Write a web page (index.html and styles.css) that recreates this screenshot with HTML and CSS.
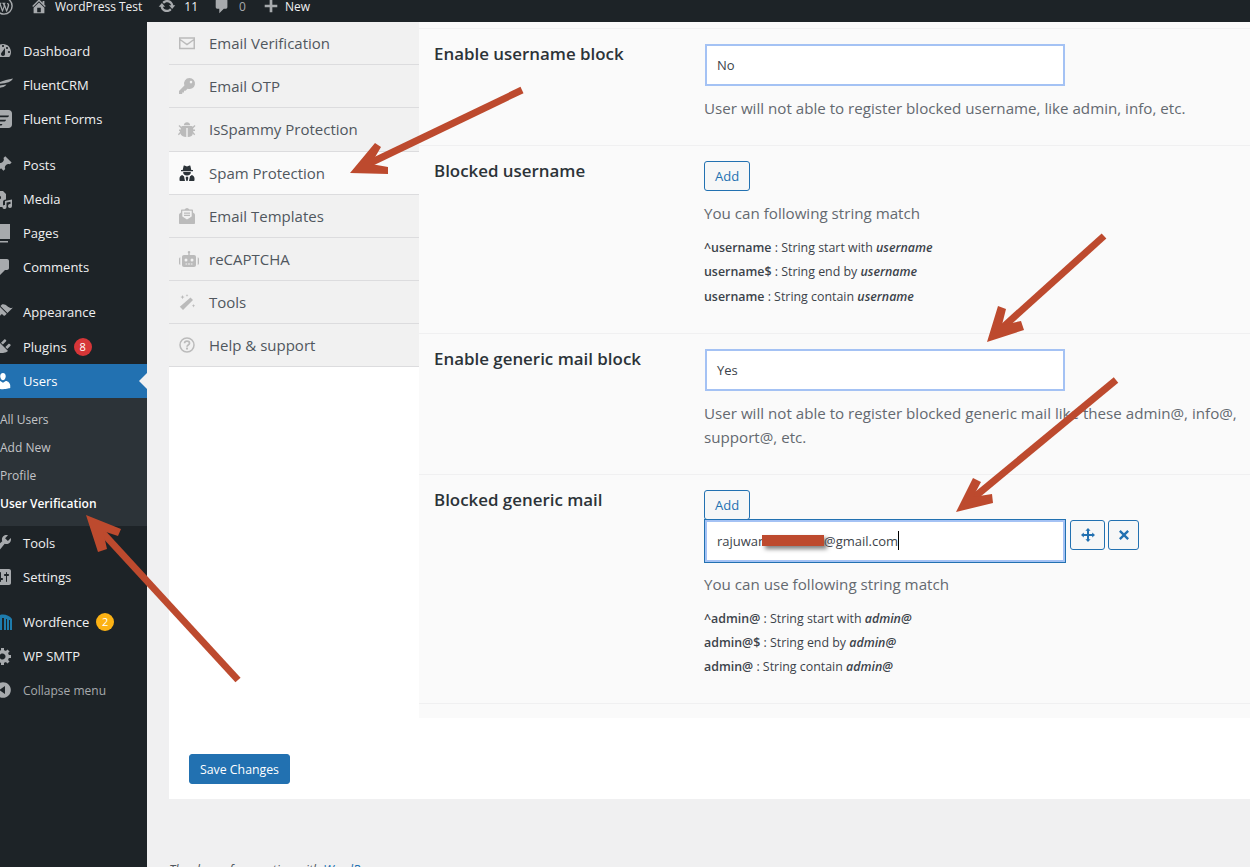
FILE: index.html
```html
<!DOCTYPE html>
<html lang="en">
<head>
  <meta charset="UTF-8">
  <meta name="viewport" content="width=device-width, initial-scale=1.0">
  <title>User Verification ‹ WordPress Test</title>
  <link rel="stylesheet" href="styles.css">
</head>
<body>
  <div class="adminbar">
    <svg class="bar-icon bar-logo" viewBox="0 0 20 20"><circle cx="10" cy="10" r="9" fill="none" stroke="#a7aaad" stroke-width="1.6"/><path d="M3.6 6.5h3.6v.7l-.9.2 2.1 6.2 1.3-3.7-.9-2.5-.8-.2v-.7h3.7v.7l-.9.2 2.1 6.1 1.1-3.4c.5-1.7-.4-2.3-.9-3.1 1-.8 2.800.2 2.700 2.100-.1 1.200-1.700 5.600-2.500 7.300h-.8l-1.900-5.300-1.900 5.300h-.8L4.700 7.400l-1.100-.2z" fill="#a7aaad"/></svg>
    <svg class="bar-icon bar-home" viewBox="0 0 20 20"><path d="M16 8.500l1.530 1.530-1.060 1.060L10 4.620l-6.470 6.470-1.060-1.060L10 2.500l4 4v-2h2v4zm-6-2.460l6 5.990V18H4v-5.970zM12 17v-5H8v5h4z"/></svg>
    <span class="bar-text bar-site">WordPress Test</span>
    <svg class="bar-icon bar-update" viewBox="0 0 20 20"><path d="M10.200 3.280c3.530 0 6.430 2.610 6.920 6h2.080l-3.500 4-3.500-4h2.320c-.45-1.970-2.210-3.440-4.320-3.440-1.450 0-2.730.71-3.540 1.780L4.950 5.660C6.230 4.200 8.110 3.280 10.200 3.280zm-.4 13.440c-3.520 0-6.430-2.610-6.920-6H.8l3.500-4c1.170 1.330 2.330 2.670 3.500 4H5.480c.45 1.970 2.210 3.440 4.320 3.440 1.450 0 2.730-.71 3.540-1.780l1.710 1.950c-1.280 1.460-3.150 2.390-5.250 2.390z"/></svg>
    <span class="bar-text bar-count">11</span>
    <svg class="bar-icon bar-comment" viewBox="0 0 20 20"><path d="M5 2h9c1.100 0 2 .9 2 2v7c0 1.100-.9 2-2 2h-2l-5 5v-5H5c-1.100 0-2-.9-2-2V4c0-1.100.9-2 2-2z"/></svg>
    <span class="bar-text bar-zero">0</span>
    <svg class="bar-icon bar-plus" viewBox="0 0 20 20"><path d="M8.500 3h3v5.500H17v3h-5.500V17h-3v-5.500H3v-3h5.500z"/></svg>
    <span class="bar-text bar-new">New</span>
  </div>

  <div class="layout">
    <nav class="sidebar">
      <a class="menu-item"><svg class="menu-icon" viewBox="0 0 20 20"><path d="M3.760 16h12.480c1.100-1.370 1.760-3.110 1.760-5 0-4.420-3.580-8-8-8s-8 3.580-8 8c0 1.890.66 3.630 1.760 5zM10 4c.55 0 1 .45 1 1s-.45 1-1 1-1-.45-1-1 .45-1 1-1zM6 6c.55 0 1 .45 1 1s-.45 1-1 1-1-.45-1-1 .45-1 1-1zm8 0c.55 0 1 .45 1 1s-.45 1-1 1-1-.45-1-1 .45-1 1-1zm-5.370 5.550L12 7v6c0 1.100-.9 2-2 2s-2-.9-2-2c0-.57.24-1.080.63-1.450zM4 10c.55 0 1 .45 1 1s-.45 1-1 1-1-.45-1-1 .45-1 1-1zm12 0c.55 0 1 .45 1 1s-.45 1-1 1-1-.45-1-1 .45-1 1-1z"/></svg>Dashboard</a>
      <a class="menu-item"><svg class="menu-icon" viewBox="0 0 20 20"><path d="M1 9.500C6 7 12 5 20 3.500c-1 2-2.500 3-4.500 3.700C11 8.500 6 9 1 9.500zM1 15c1-2.500 2.500-3.500 5-4.200 2.500-.6 4.500-.9 7.500-1.300-1 1.600-2.500 2.400-4.500 2.800-3.500.6-5.800 1-8 2.700z"/></svg>FluentCRM</a>
      <a class="menu-item"><svg class="menu-icon" viewBox="0 0 20 20"><path fill-rule="evenodd" d="M3 1h12.500C17.500 1 19 2.500 19 4.500v11c0 2-1.500 3.500-3.500 3.500H3V1zm-3 5.500v1.700h14.500c.8 0 1.300-.7 1.500-1.700zm0 4.200v1.700h11.500c.8 0 1.300-.7 1.500-1.700zM3 15v1.500h5c.8 0 1.200-.6 1.400-1.500z"/></svg>Fluent Forms</a>

      <a class="menu-item menu-gap"><svg class="menu-icon" viewBox="0 0 20 20"><path d="M10.440 3.020l1.820-1.820 6.360 6.350-1.830 1.820c-1.050-.68-2.480-.57-3.410.36l-.75.75c-.92.93-1.040 2.350-.35 3.410l-1.830 1.820-2.410-2.410-2.800 2.790c-.42.42-3.380 2.710-3.800 2.290s1.860-3.390 2.280-3.810l2.790-2.790L4.100 9.360l1.830-1.820c1.050.69 2.480.57 3.400-.36l.75-.75c.93-.92 1.050-2.350.36-3.410z"/></svg>Posts</a>
      <a class="menu-item"><svg class="menu-icon" viewBox="0 0 20 20"><path d="M2 2h8l3 3v5.500c-2 0-3 1-3 2.500v5H2zm4 4.500a2 2 0 1 0 0 4 2 2 0 0 0 0-4zM12 12l7-1.500V17a2 2 0 1 1-1.500-1.900V12.700L13.500 13.500V18a2 2 0 1 1-1.500-1.900z"/></svg>Media</a>
      <a class="menu-item"><svg class="menu-icon" viewBox="0 0 20 20"><path d="M6 1h11v15H6zM4 4v14h11v1.500H2.500V4z"/></svg>Pages</a>
      <a class="menu-item"><svg class="menu-icon" viewBox="0 0 20 20"><path d="M5 2h9c1.100 0 2 .9 2 2v7c0 1.100-.9 2-2 2h-2l-5 5v-5H5c-1.100 0-2-.9-2-2V4c0-1.100.9-2 2-2z"/></svg>Comments</a>

      <a class="menu-item menu-gap-small"><svg class="menu-icon" viewBox="0 0 20 20"><path d="M14.480 11.060L7.410 3.990l1.500-1.500c.5-.56 2.300-.47 3.510.32 1.210.8 1.430 1.280 2.910 2.100 1.180.64 2.450 1.260 4.450.85zm-.71.71L6.700 4.700 4.930 6.470c-.39.39-.39 1.020 0 1.410l1.060 1.060c.39.39.39 1.030 0 1.420-.6.6-3.500 2.400-4.500 3.500-1.200 1.300-1.200 2.700-.4 3.500s2.200.8 3.500-.4c1.100-1 2.900-3.900 3.500-4.500.39-.39 1.030-.39 1.420 0l1.060 1.060c.39.39 1.020.39 1.410 0z"/></svg>Appearance</a>
      <a class="menu-item menu-plugins"><svg class="menu-icon" viewBox="0 0 20 20"><path d="M13.110 4.360L9.870 7.600 8 5.730l3.240-3.240c.35-.34 1.050-.2 1.560.32.52.51.66 1.210.31 1.550zm-8 1.770l.91-1.120 9.010 9.010-1.190.84c-.71.71-2.630 1.160-3.820 1.160H6.140L4.900 17.260c-.59.59-1.540.59-2.120 0-.59-.58-.59-1.530 0-2.120l1.240-1.240v-3.880c0-1.130.4-3.190 1.090-3.890zm7.260 3.970l3.240-3.240c.34-.35 1.040-.21 1.550.31.52.51.66 1.210.31 1.550l-3.240 3.250z"/></svg>Plugins<span class="badge badge-red">8</span></a>
      <a class="menu-item menu-active"><svg class="menu-icon" viewBox="0 0 20 20"><path d="M10 9.250c-2.270 0-2.730-3.440-2.730-3.440C7 4.020 7.820 2 9.970 2c2.160 0 2.980 2.020 2.710 3.810 0 0-.41 3.440-2.680 3.440zm0 2.570L12.720 10c2.390 0 4.520 2.330 4.520 4.530v2.490s-3.650 1.130-7.240 1.130c-3.650 0-7.240-1.130-7.240-1.130v-2.490c0-2.250 1.940-4.480 4.470-4.480z"/></svg>Users</a>
      <div class="submenu">
        <a class="sub-item">All Users</a>
        <a class="sub-item">Add New</a>
        <a class="sub-item">Profile</a>
        <a class="sub-item sub-current">User Verification</a>
      </div>
      <a class="menu-item"><svg class="menu-icon" viewBox="0 0 20 20"><path d="M16.680 9.770c-1.340 1.340-3.300 1.670-4.950.99l-5.410 6.520c-.99.99-2.590.99-3.580 0s-.99-2.590 0-3.570l6.520-5.420c-.68-1.650-.35-3.610.99-4.950 1.280-1.280 3.120-1.620 4.720-1.060l-2.890 2.890 2.820 2.820 2.860-2.870c.53 1.580.18 3.390-1.080 4.670z"/></svg>Tools</a>
      <a class="menu-item"><svg class="menu-icon" viewBox="0 0 20 20"><path d="M18 16V4c0-1.100-.9-2-2-2H4c-1.100 0-2 .9-2 2v12c0 1.100.9 2 2 2h12c1.100 0 2-.9 2-2zM8 11h1c.55 0 1 .45 1 1s-.45 1-1 1H8v1.500c0 .28-.22.5-.5.5s-.5-.22-.5-.5V13H6c-.55 0-1-.45-1-1s.45-1 1-1h1V5.500c0-.28.22-.5.5-.5s.5.22.5.5V11zm5-2h-1c-.55 0-1-.45-1-1s.45-1 1-1h1V5.500c0-.28.22-.5.5-.5s.5.22.5.5V7h1c.55 0 1 .45 1 1s-.45 1-1 1h-1v5.500c0 .28-.22.5-.5.5s-.5-.22-.5-.5V9z"/></svg>Settings</a>

      <a class="menu-item menu-gap-small"><svg class="menu-icon menu-icon-blue" viewBox="0 0 20 20"><path d="M1 7c2-3 5.500-4.500 9-4.500S17 4 19 7v11h-2V8h-1v10h-2V7h-1v11h-2V6H9v12H7V7H6v11H4V8H3v10H1z"/></svg>Wordfence<span class="badge badge-amber">2</span></a>
      <a class="menu-item"><svg class="menu-icon" viewBox="0 0 20 20"><path d="M18 12h-2.180c-.17.7-.44 1.350-.81 1.930l1.540 1.540-2.100 2.100-1.540-1.540c-.58.36-1.230.63-1.910.79V19H8v-2.180c-.68-.16-1.330-.43-1.910-.79l-1.540 1.540-2.120-2.120 1.540-1.540c-.36-.58-.63-1.230-.79-1.910H1V9.030h2.170c.16-.7.44-1.350.8-1.940L2.430 5.550l2.100-2.100 1.540 1.540c.58-.37 1.240-.64 1.930-.81V2h3v2.180c.68.16 1.330.43 1.910.79l1.540-1.540 2.120 2.120-1.540 1.540c.36.59.64 1.240.8 1.940H18V12zm-8.500 1.500c1.660 0 3-1.340 3-3s-1.340-3-3-3-3 1.340-3 3 1.340 3 3 3z"/></svg>WP SMTP</a>
      <a class="menu-item menu-collapse"><svg class="menu-icon" viewBox="0 0 20 20"><path d="M10 2.160c4.330 0 7.840 3.510 7.840 7.840s-3.510 7.840-7.840 7.840S2.160 14.330 2.160 10 5.710 2.160 10 2.160zm2 11.720V6.120L6.180 9.970z"/></svg>Collapse menu</a>
    </nav>

    <main class="content">
      <div class="panel">
        <div class="settings">
          <div class="tabs">
            <a class="tab"><svg class="tab-icon" viewBox="0 0 16 16"><path fill="none" stroke="currentColor" stroke-width="1.500" d="M.75 3h14.500v10.500H.75zM1 4.500l7 5 7-5"/></svg>Email Verification</a>
            <a class="tab"><svg class="tab-icon" viewBox="0 0 16 16"><path d="M10.500 0a5.500 5.500 0 1 1-1.900 10.650L6.500 12.700H5v1.800H3.200V16H0v-3l5.400-5.400A5.500 5.500 0 0 1 10.500 0zm1.500 2.800a1.300 1.300 0 1 0 0 2.600 1.300 1.300 0 0 0 0-2.600z"/></svg>Email OTP</a>
            <a class="tab tab-tall"><svg class="tab-icon" viewBox="0 0 16 16"><path d="M4.800 4.200C5 2.500 6.300 1.300 8 1.300s3 1.200 3.200 2.900zM3.500 5h9c.6 0 1 .4 1.300.8L15.500 4l1 1-2.300 2.300V8.500H16V10h-1.800v1l2 2.300-1 1-1.500-1.700C13.900 14.600 12 16 8.700 16V7H7.300v9c-3.300 0-5.200-1.400-5.900-3.400L-.1 14.300l-1-1 2-2.300V10H0V8.500h1.800V7.300L-.5 5l1-1 1.700 1.800C2.500 5.400 2.900 5 3.500 5z"/></svg>IsSpammy Protection</a>
            <a class="tab tab-active"><svg class="tab-icon" viewBox="0 0 16 16"><path fill-rule="evenodd" d="M5.400.6L8 1.400 10.600.6c.4-.1.7.1.8.4L12.300 5H14v1.200H2V5h1.700L4.600 1c.1-.3.400-.5.8-.4zM4.200 7h7.600c.2 2-1.200 3.500-3.800 3.500S4 9 4.200 7zM3.300 10c.4.500 1 .9 1.700 1.200L6 16H1.500c-.6 0-1-.4-1-1v-1.500C.5 11.700 1.700 10.500 3.300 10zm9.400 0c1.600.5 2.800 1.700 2.800 3.500V15c0 .6-.4 1-1 1H10l1-4.800c.7-.3 1.300-.7 1.700-1.200zM7 11.700h2L9.300 13 8.600 16H7.400l-.7-3z"/></svg>Spam Protection</a>
            <a class="tab"><svg class="tab-icon" viewBox="0 0 16 16"><path fill-rule="evenodd" d="M8 0c.5 0 .9.2 1.300.5L10.500 1.500H13c.6 0 1 .4 1 1v2.100l1.300 1c.4.300.7.800.7 1.300V15c0 .6-.4 1-1 1H1c-.6 0-1-.4-1-1V6.900c0-.5.3-1 .7-1.300l1.300-1V2.500c0-.6.4-1 1-1h2.500L6.700.5C7.100.2 7.500 0 8 0zM3.300 2.800v5.700L8 11.500l4.700-3V2.800zM5 4.500h6v1.200H5zM5 6.800h6V8H5z"/></svg>Email Templates</a>
            <a class="tab"><svg class="tab-icon tab-icon-wide" viewBox="0 0 20 16"><path fill-rule="evenodd" d="M10 0a1.200 1.200 0 0 1 .7 2.200V4H15c1.200 0 2 .8 2 2v8c0 1.200-.8 2-2 2H5c-1.200 0-2-.8-2-2V6c0-1.200.8-2 2-2h4.300V2.200A1.200 1.200 0 0 1 10 0zM7 7.500a1.500 1.500 0 1 0 0 3 1.500 1.500 0 0 0 0-3zm6 0a1.500 1.500 0 1 0 0 3 1.500 1.500 0 0 0 0-3zM6.500 12.500v1h1.700v-1zm2.500 0v1h2v-1zm2.800 0v1h1.700v-1zM0 8c0-1 .5-1.500 1.300-1.800V14C.5 13.700 0 13 0 12zm20 0v4c0 1-.5 1.700-1.300 2V6.200C19.500 6.500 20 7 20 8z"/></svg>reCAPTCHA</a>
            <a class="tab"><svg class="tab-icon" viewBox="0 0 16 16"><path d="M11.500 3.500l2.500 2.500L4 16l-3.200-3.200zM3.500 1l.6 1.500 1.500.6-1.500.6-.6 1.500-.6-1.500-1.500-.6 1.500-.6zM8 0l.4 1 1 .4-1 .4L8 3l-.4-1.200-1-.4 1-.4zM14.500 10l.5 1.200 1.200.5-1.200.5-.5 1.200-.5-1.200-1.200-.5 1.200-.5z"/></svg>Tools</a>
            <a class="tab"><svg class="tab-icon" viewBox="0 0 16 16"><circle cx="8" cy="8" r="7" fill="none" stroke="currentColor" stroke-width="1.500"/><path fill="none" stroke="currentColor" stroke-width="1.700" d="M5.500 6.300C5.600 4.900 6.700 4.200 8 4.200c1.400 0 2.500.8 2.500 2 0 1.900-2.500 1.700-2.500 3.600"/><rect x="7" y="10.600" width="2" height="1.900" fill="currentColor"/></svg>Help &amp; support</a>
          </div>

          <div class="fields">
            <section class="row row-first">
              <h3 class="row-label">Enable username block</h3>
              <div class="row-body">
                <div class="select">No</div>
                <p class="desc">User will not able to register blocked username, like admin, info, etc.</p>
              </div>
            </section>

            <section class="row row-list">
              <h3 class="row-label">Blocked username</h3>
              <div class="row-body">
                <button class="btn">Add</button>
                <p class="desc">You can following string match</p>
                <ul class="matches">
                  <li><b>^username</b> : String start with <b><i>username</i></b></li>
                  <li><b>username$</b> : String end by <b><i>username</i></b></li>
                  <li><b>username</b> : String contain <b><i>username</i></b></li>
                </ul>
              </div>
            </section>

            <section class="row">
              <h3 class="row-label">Enable generic mail block</h3>
              <div class="row-body">
                <div class="select">Yes</div>
                <p class="desc">User will not able to register blocked generic mail like these admin@, info@, support@, etc.</p>
              </div>
            </section>

            <section class="row row-last">
              <h3 class="row-label">Blocked generic mail</h3>
              <div class="row-body">
                <button class="btn">Add</button>
                <div class="mail-line">
                  <div class="mail-input">rajuwan<span class="redacted"></span>@gmail.com<span class="caret"></span></div>
                  <button class="btn btn-icon btn-move"><svg viewBox="0 0 14 14" width="14" height="14"><path d="M7 0l2.600 2.800H8V6h3.200V4.400L14 7l-2.800 2.600V8H8v3.200h1.600L7 14l-2.600-2.800H6V8H2.800v1.600L0 7l2.800-2.600V6H6V2.800H4.400z"/></svg></button>
                  <button class="btn btn-icon btn-remove"><svg viewBox="0 0 12 12" width="10" height="10"><path d="M2 0l4 4 4-4 2 2-4 4 4 4-2 2-4-4-4 4-2-2 4-4-4-4z"/></svg></button>
                </div>
                <p class="desc">You can use following string match</p>
                <ul class="matches">
                  <li><b>^admin@</b> : String start with <b><i>admin@</i></b></li>
                  <li><b>admin@$</b> : String end by <b><i>admin@</i></b></li>
                  <li><b>admin@</b> : String contain <b><i>admin@</i></b></li>
                </ul>
              </div>
            </section>
          </div>
        </div>

        <div class="panel-foot">
          <button class="btn-save">Save Changes</button>
        </div>
      </div>
      <p class="footer-note">Thank you for creating with <a>WordPress</a>.</p>
    </main>
  </div>

  <svg class="arrows" viewBox="0 0 1250 867" width="1250" height="867">
    <g stroke="#bd4a2e" stroke-width="7" fill="#bd4a2e">
      <line x1="522" y1="90" x2="368" y2="164"/>
      <line x1="1104" y1="236" x2="1002" y2="328"/>
      <line x1="1116" y1="380" x2="972" y2="499"/>
      <line x1="238" y1="680" x2="101" y2="531"/>
    </g>
    <g fill="#bd4a2e">
      <polygon points="350,173 375,143 381,147 371,164 388,167 388,174"/>
      <polygon points="987,342 998,306 1006,309 1002,325 1021,321 1024,330"/>
      <polygon points="956,512 973,478 981,482 973,497 992,494 993,503"/>
      <polygon points="86,515 121,529 118,536 103,531 107,549 98,552"/>
    </g>
  </svg>
</body>
</html>
```

FILE: styles.css
```css
html, body {
  height: 867px;
  overflow: hidden;
}
body {
  margin: 0;
  position: relative;
  background: #f0f0f1;
  font-family: "Open Sans", "Noto Sans", sans-serif;
  font-size: 13px;
  color: #3c434a;
}

/* admin bar, top is cut off in the shot */
.adminbar {
  display: flex;
  align-items: flex-start;
  height: 22px;
  background: #1d2327;
  color: #f0f0f1;
  font-size: 12px;
  line-height: 12px;
}
.bar-text { margin-top: 1px; }
.bar-icon {
  width: 18px;
  height: 18px;
  margin-top: -3px;
  fill: #a7aaad;
  flex: none;
}
.bar-logo { margin-left: -5px; }
.bar-home { margin-left: 17px; }
.bar-site { margin-left: 7px; }
.bar-update { margin-left: 16px; }
.bar-count { margin-left: 8px; }
.bar-comment { margin-left: 15px; }
.bar-zero { margin-left: 8px; color: #a7aaad; }
.bar-plus { margin-left: 16px; }
.bar-new { margin-left: 5px; }

.layout {
  display: flex;
  height: 845px;
}

/* sidebar */
.sidebar {
  width: 147px;
  flex: none;
  padding-top: 12px;
  background: #1d2327;
  overflow: hidden;
  box-sizing: border-box;
}
.menu-item {
  position: relative;
  display: flex;
  align-items: center;
  height: 34px;
  color: #f0f0f1;
}
.menu-gap { margin-top: 12px; }
.menu-gap-small { margin-top: 11px; }
.menu-plugins { margin-top: 1px; }
.menu-icon {
  width: 20px;
  height: 20px;
  margin-left: -7px;
  margin-right: 10px;
  fill: #a7aaad;
  flex: none;
}
.menu-icon-blue { fill: #1e7cad; }
.menu-active {
  background: #2271b1;
  color: #fff;
}
.menu-active .menu-icon { fill: #fff; }
.menu-active::after {
  content: "";
  position: absolute;
  right: 0;
  top: 9px;
  border: 8px solid transparent;
  border-left: 0;
  border-right-color: #f0f0f1;
}
.menu-collapse { color: #a7aaad; font-size: 12px; }
.badge {
  width: 18px;
  height: 18px;
  margin-left: 7px;
  border-radius: 50%;
  color: #fff;
  font-size: 11px;
  line-height: 18px;
  text-align: center;
}
.badge-red { background: #d63638; }
.badge-amber { background: #fcb214; }
.submenu {
  padding: 8px 0;
  background: #2c3338;
  font-size: 12px;
}
.sub-item {
  display: block;
  height: 28px;
  line-height: 28px;
  color: #c3c4c7;
}
.sub-current {
  color: #fff;
  font-weight: 600;
}

/* main area */
.content {
  flex: 1;
  min-width: 0;
  padding-left: 22px;
}
.panel {
  background: #fff;
  height: 777px;
}
.settings {
  display: flex;
  height: 696px;
}
.tabs {
  width: 250px;
  flex: none;
}
.tab {
  display: flex;
  align-items: center;
  box-sizing: border-box;
  height: 43px;
  padding-left: 10px;
  background: #f1f1f1;
  border-bottom: 1px solid #dcdcde;
  color: #50575e;
  font-size: 15px;
}
.tab-tall {
  height: 44px;
  padding-bottom: 1px;
}
.tab-active {
  background: #fafafa;
}
.tab-icon {
  width: 16px;
  height: 16px;
  margin-right: 14px;
  flex: none;
  fill: currentColor;
  color: #bbb;
  overflow: visible;
}
.tab-icon-wide { width: 20px; margin-right: 10px; }
.tab-active .tab-icon { color: #2c3338; }

.fields {
  flex: 1;
  min-width: 0;
  padding-top: 6px;
  background: #fafafa;
}
.row {
  display: flex;
  padding: 15px 0 25px 15px;
  border-bottom: 1px solid #f0f0f1;
}
.row-first { border-top: 1px solid #f0f0f1; }
.row-list { padding-bottom: 24px; }
.row-last { padding-bottom: 23px; }
.row-label {
  width: 270px;
  flex: none;
  margin: 0;
  color: #2c3338;
  font-size: 16.9px;
  font-weight: 600;
  line-height: 20px;
}
.row-body {
  flex: 1;
  min-width: 0;
}
.select {
  box-sizing: border-box;
  width: 360px;
  height: 42px;
  margin-left: 1px;
  padding-left: 10px;
  background: #fff;
  border: 2px solid #a4c2f4;
  line-height: 38px;
}
.desc {
  margin: 10px 0 0;
  color: #646970;
  font-size: 15.15px;
  line-height: 24px;
}
.btn {
  display: block;
  box-sizing: border-box;
  height: 30px;
  padding: 0 10px;
  background: #f6f7f7;
  border: 1px solid #2271b1;
  border-radius: 3px;
  color: #2271b1;
  font-family: inherit;
  font-size: 13px;
}
.matches {
  margin: 11px 0 0;
  padding: 0;
  list-style: none;
  font-size: 12.4px;
  line-height: 24.3px;
}
.matches b { font-weight: 600; }
.mail-line {
  display: flex;
  align-items: flex-start;
  margin: -1px 0 -1px;
}
.mail-input {
  display: flex;
  align-items: center;
  box-sizing: border-box;
  width: 362px;
  height: 44px;
  margin-right: 4px;
  padding-left: 12px;
  background: #fff;
  border: 1px solid #2271b1;
  box-shadow: inset 0 0 0 2px #a4c2f4;
  white-space: nowrap;
}
.redacted {
  width: 62px;
  height: 11px;
  margin-left: -4px;
  background: #bd4a2e;
  box-shadow: 3px 3px 4px rgba(0, 0, 0, 0.5);
}
.caret {
  width: 1px;
  height: 19px;
  background: #000;
}
.btn-icon {
  display: flex;
  align-items: center;
  justify-content: center;
  padding: 0;
  margin-top: 1px;
  fill: #2271b1;
}
.btn-move { width: 35px; margin-right: 3px; }
.btn-remove { width: 31px; }

.panel-foot {
  padding: 36px 0 0 20px;
}
.btn-save {
  height: 30px;
  width: 101px;
  padding: 0;
  background: #2271b1;
  border: 1px solid #2271b1;
  border-radius: 3px;
  color: #fff;
  font-family: inherit;
  font-size: 12.3px;
}
.footer-note {
  margin: 62px 0 0;
  color: #50575e;
  font-size: 12.5px;
  font-style: italic;
}
.footer-note a { color: #2271b1; }

/* hand drawn annotations on top of the shot */
.arrows {
  position: absolute;
  top: 0;
  left: 0;
  pointer-events: none;
}
```
